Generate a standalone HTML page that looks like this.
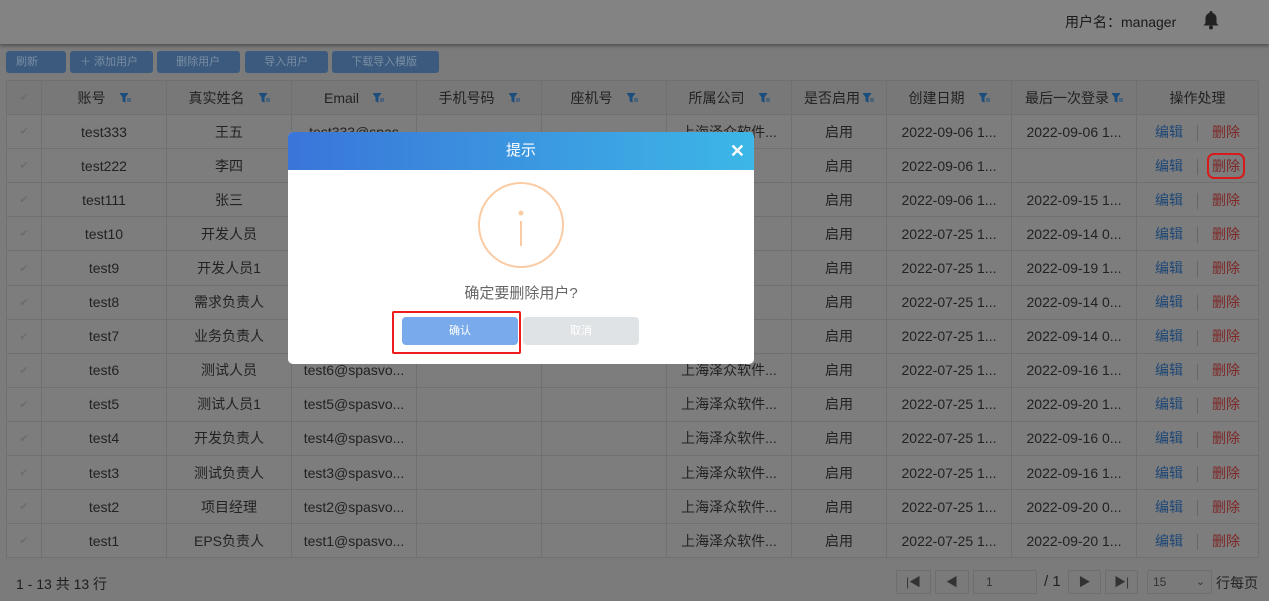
<!DOCTYPE html>
<html><head><meta charset="utf-8"><style>
*{box-sizing:border-box;margin:0;padding:0}
body{width:1269px;height:601px;overflow:hidden;background:#7b7b7b;font-family:"Liberation Sans","Noto Sans CJK SC",sans-serif;color:#1e1e1e;position:relative}
.top{position:absolute;left:0;top:0;width:1269px;height:44px;background:#838383;box-shadow:0 2px 3px rgba(0,0,0,.35)}
.user{position:absolute;left:1065px;top:12px;font-size:14px;color:#1a1a1a}
.btn{position:absolute;top:51px;height:22px;background:#3b5a7e;border-radius:3px;color:#7a8ea3;font-size:11px;line-height:22px;padding-left:10px}
table{position:absolute;left:6px;top:80px;border-collapse:collapse;font-size:14px}
td{border:1px solid #707070;height:34.1px;text-align:center;background:#7d7d7d;white-space:nowrap;overflow:hidden;color:#222}
tr.h td{background:#787878;color:#222}
.f{display:inline-block;width:11px;height:10px;margin-left:14px;vertical-align:middle;position:relative;top:-1px}
.ck{color:#6c6c6c !important;font-size:11px}
.b{color:#1d4776}.r{color:#7e2727}
.sep{display:inline-block;width:1px;height:16px;background:#666;margin:0 14px;vertical-align:middle}
.pg{position:absolute;top:570px;height:24px;border:1px solid #6e6e6e;border-radius:2px;background:#7a7a7a;font-size:12px;color:#333;text-align:center;line-height:22px}
.dlg{position:absolute;left:288px;top:132px;width:466px;height:232px;background:#fff;border-radius:5px;overflow:hidden}
.dh{height:38px;background:linear-gradient(90deg,#3a75d9,#3cb7e7);color:#fff;text-align:center;font-size:15px;line-height:38px;position:relative}
</style></head><body>
<div class="top"><div class="user">用户名：manager</div>
<svg style="position:absolute;left:1202px;top:10px" width="18" height="20" viewBox="0 0 18 20"><path d="M9 1a1.5 1.5 0 0 1 1.5 1.5v.4A5.5 5.5 0 0 1 14.5 8v5l2 2.5H1.5l2-2.5V8a5.5 5.5 0 0 1 4-5.1v-.4A1.5 1.5 0 0 1 9 1z" fill="#222"/><circle cx="9" cy="17.5" r="2" fill="#222"/></svg></div>
<div class="btn" style="left:6px;width:60px">刷新</div>
<div class="btn" style="left:70px;width:83px">＋ 添加用户</div>
<div class="btn" style="left:157px;width:83px">&nbsp;&nbsp; 删除用户</div>
<div class="btn" style="left:245px;width:83px">&nbsp;&nbsp; 导入用户</div>
<div class="btn" style="left:332px;width:107px">&nbsp;&nbsp; 下载导入模版</div>
<table>
<colgroup><col style="width:35px"><col style="width:125px"><col style="width:125px"><col style="width:125px"><col style="width:125px"><col style="width:125px"><col style="width:125px"><col style="width:95px"><col style="width:125px"><col style="width:125px"><col style="width:122px"></colgroup>
<tr class="h"><td class="ck">✔</td><td>账号<svg class="f" viewBox="0 0 11 10"><path d="M0 0h8L5 4v5L3 8V4z M7 6h4M7 8h4" stroke="#1b4e7d" fill="#1b4e7d"/></svg></td><td>真实姓名<svg class="f" viewBox="0 0 11 10"><path d="M0 0h8L5 4v5L3 8V4z M7 6h4M7 8h4" stroke="#1b4e7d" fill="#1b4e7d"/></svg></td><td>Email<svg class="f" viewBox="0 0 11 10"><path d="M0 0h8L5 4v5L3 8V4z M7 6h4M7 8h4" stroke="#1b4e7d" fill="#1b4e7d"/></svg></td><td>手机号码<svg class="f" viewBox="0 0 11 10"><path d="M0 0h8L5 4v5L3 8V4z M7 6h4M7 8h4" stroke="#1b4e7d" fill="#1b4e7d"/></svg></td><td>座机号<svg class="f" viewBox="0 0 11 10"><path d="M0 0h8L5 4v5L3 8V4z M7 6h4M7 8h4" stroke="#1b4e7d" fill="#1b4e7d"/></svg></td><td>所属公司<svg class="f" viewBox="0 0 11 10"><path d="M0 0h8L5 4v5L3 8V4z M7 6h4M7 8h4" stroke="#1b4e7d" fill="#1b4e7d"/></svg></td><td>是否启用<svg class="f" style="margin-left:3px" viewBox="0 0 11 10"><path d="M0 0h8L5 4v5L3 8V4z M7 6h4M7 8h4" stroke="#1b4e7d" fill="#1b4e7d"/></svg></td><td>创建日期<svg class="f" viewBox="0 0 11 10"><path d="M0 0h8L5 4v5L3 8V4z M7 6h4M7 8h4" stroke="#1b4e7d" fill="#1b4e7d"/></svg></td><td>最后一次登录<svg class="f" style="margin-left:3px" viewBox="0 0 11 10"><path d="M0 0h8L5 4v5L3 8V4z M7 6h4M7 8h4" stroke="#1b4e7d" fill="#1b4e7d"/></svg></td><td>操作处理</td></tr>
<tr><td class="ck">✔</td><td>test333</td><td>王五</td><td>test333@spas</td><td></td><td></td><td>上海泽众软件...</td><td>启用</td><td>2022-09-06 1...</td><td>2022-09-06 1...</td><td><span class="b">编辑</span><span class="sep"></span><span class="r">删除</span></td></tr>
<tr><td class="ck">✔</td><td>test222</td><td>李四</td><td></td><td></td><td></td><td></td><td>启用</td><td>2022-09-06 1...</td><td></td><td><span class="b">编辑</span><span class="sep"></span><span class="r" style="outline:2px solid #d81a1a;outline-offset:3px;border-radius:2px">删除</span></td></tr>
<tr><td class="ck">✔</td><td>test111</td><td>张三</td><td></td><td></td><td></td><td></td><td>启用</td><td>2022-09-06 1...</td><td>2022-09-15 1...</td><td><span class="b">编辑</span><span class="sep"></span><span class="r">删除</span></td></tr>
<tr><td class="ck">✔</td><td>test10</td><td>开发人员</td><td></td><td></td><td></td><td></td><td>启用</td><td>2022-07-25 1...</td><td>2022-09-14 0...</td><td><span class="b">编辑</span><span class="sep"></span><span class="r">删除</span></td></tr>
<tr><td class="ck">✔</td><td>test9</td><td>开发人员1</td><td></td><td></td><td></td><td></td><td>启用</td><td>2022-07-25 1...</td><td>2022-09-19 1...</td><td><span class="b">编辑</span><span class="sep"></span><span class="r">删除</span></td></tr>
<tr><td class="ck">✔</td><td>test8</td><td>需求负责人</td><td></td><td></td><td></td><td></td><td>启用</td><td>2022-07-25 1...</td><td>2022-09-14 0...</td><td><span class="b">编辑</span><span class="sep"></span><span class="r">删除</span></td></tr>
<tr><td class="ck">✔</td><td>test7</td><td>业务负责人</td><td></td><td></td><td></td><td></td><td>启用</td><td>2022-07-25 1...</td><td>2022-09-14 0...</td><td><span class="b">编辑</span><span class="sep"></span><span class="r">删除</span></td></tr>
<tr><td class="ck">✔</td><td>test6</td><td>测试人员</td><td>test6@spasvo...</td><td></td><td></td><td>上海泽众软件...</td><td>启用</td><td>2022-07-25 1...</td><td>2022-09-16 1...</td><td><span class="b">编辑</span><span class="sep"></span><span class="r">删除</span></td></tr>
<tr><td class="ck">✔</td><td>test5</td><td>测试人员1</td><td>test5@spasvo...</td><td></td><td></td><td>上海泽众软件...</td><td>启用</td><td>2022-07-25 1...</td><td>2022-09-20 1...</td><td><span class="b">编辑</span><span class="sep"></span><span class="r">删除</span></td></tr>
<tr><td class="ck">✔</td><td>test4</td><td>开发负责人</td><td>test4@spasvo...</td><td></td><td></td><td>上海泽众软件...</td><td>启用</td><td>2022-07-25 1...</td><td>2022-09-16 0...</td><td><span class="b">编辑</span><span class="sep"></span><span class="r">删除</span></td></tr>
<tr><td class="ck">✔</td><td>test3</td><td>测试负责人</td><td>test3@spasvo...</td><td></td><td></td><td>上海泽众软件...</td><td>启用</td><td>2022-07-25 1...</td><td>2022-09-16 1...</td><td><span class="b">编辑</span><span class="sep"></span><span class="r">删除</span></td></tr>
<tr><td class="ck">✔</td><td>test2</td><td>项目经理</td><td>test2@spasvo...</td><td></td><td></td><td>上海泽众软件...</td><td>启用</td><td>2022-07-25 1...</td><td>2022-09-20 0...</td><td><span class="b">编辑</span><span class="sep"></span><span class="r">删除</span></td></tr>
<tr><td class="ck">✔</td><td>test1</td><td>EPS负责人</td><td>test1@spasvo...</td><td></td><td></td><td>上海泽众软件...</td><td>启用</td><td>2022-07-25 1...</td><td>2022-09-20 1...</td><td><span class="b">编辑</span><span class="sep"></span><span class="r">删除</span></td></tr>
</table>
<div style="position:absolute;left:16px;top:574px;font-size:14px;color:#1e1e1e">1 - 13 共 13 行</div>
<div class="pg" style="left:896px;width:35px">|◀</div>
<div class="pg" style="left:935px;width:34px">◀</div>
<div class="pg" style="left:973px;width:64px;text-align:left;padding-left:12px">1</div>
<div style="position:absolute;left:1044px;top:573px;font-size:15px;color:#222">/ 1</div>
<div class="pg" style="left:1068px;width:33px">▶</div>
<div class="pg" style="left:1105px;width:33px">▶|</div>
<div class="pg" style="left:1147px;width:65px;text-align:left;padding-left:5px">15<span style="position:absolute;right:6px;font-size:11px">⌄</span></div>
<div style="position:absolute;left:1216px;top:573px;font-size:14px;color:#222">行每页</div>

<div class="dlg">
<div class="dh">提示<span style="position:absolute;right:9px;top:0;font-size:18px;font-weight:bold">✕</span></div>
<svg style="position:absolute;left:189px;top:50px" width="88" height="88" viewBox="0 0 88 88"><circle cx="44" cy="43" r="42" fill="none" stroke="#fbcba3" stroke-width="2"/><circle cx="44" cy="31" r="2.5" fill="#fbcba3"/><line x1="44" y1="39" x2="44" y2="64" stroke="#fbcba3" stroke-width="2"/></svg>
<div style="position:absolute;left:0;width:466px;top:150px;text-align:center;font-size:15px;color:#666">确定要删除用户?</div>
<div style="position:absolute;left:114px;top:185px;width:116px;height:28px;background:#79aaeb;border-radius:4px;color:#fff;font-size:11px;text-align:center;line-height:28px">确认</div>
<div style="position:absolute;left:235px;top:185px;width:116px;height:28px;background:#e0e3e5;border-radius:4px;color:#fff;font-size:11px;text-align:center;line-height:28px">取消</div>
<div style="position:absolute;left:104px;top:179px;width:129px;height:43px;border:2px solid #ee1c1c;border-radius:2px"></div>
</div>
</body></html>
